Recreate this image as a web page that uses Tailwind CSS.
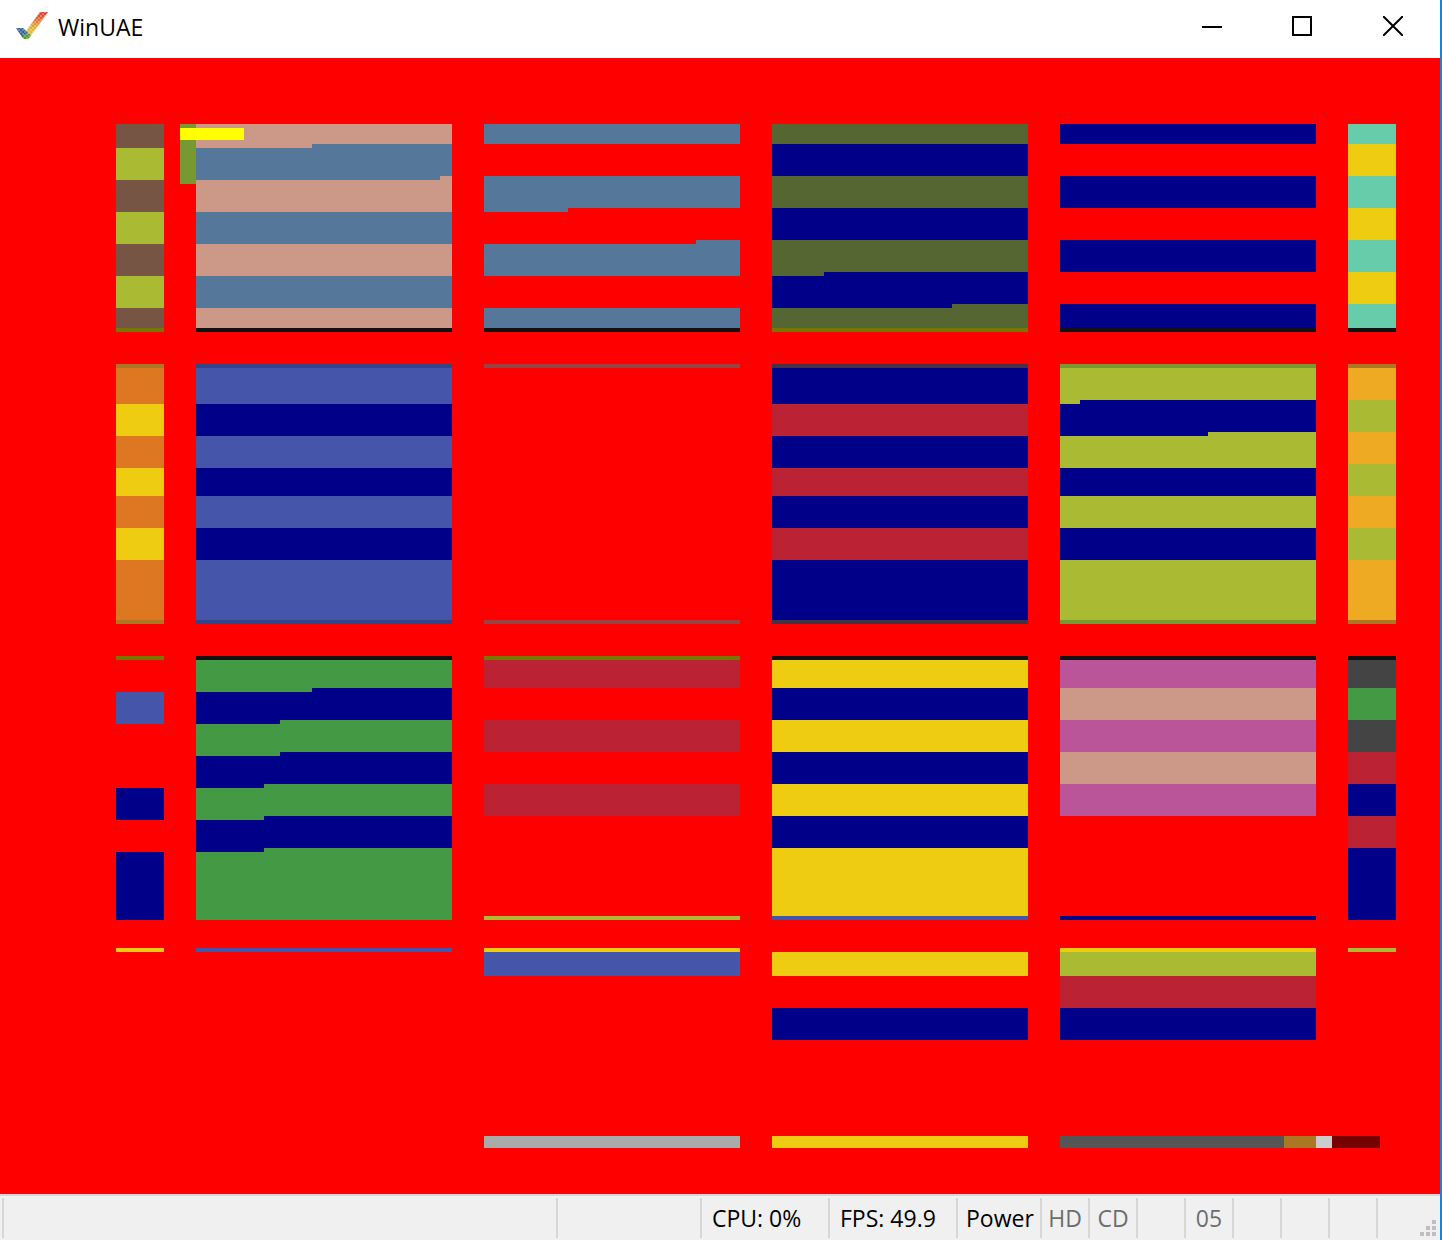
<!DOCTYPE html>
<html lang="en">
<head>
<meta charset="utf-8">
<title>WinUAE</title>
<script src="https://cdn.jsdelivr.net/npm/@tailwindcss/browser@4"></script>
</head>
<body class="flex min-h-screen flex-col border-r-2 border-[#1883d7] bg-white text-[23px] leading-8 text-black font-['Open_Sans',sans-serif]">

<header class="flex h-[58px] shrink-0 items-start justify-between pl-4">
  <div class="flex items-center gap-[10px] pt-[11px]">
    <svg class="h-8 w-8" viewBox="0 0 32 32" aria-hidden="true">
      <defs>
        <linearGradient id="tick" x1="0" y1="0" x2="0" y2="1">
          <stop offset="0" stop-color="#dc3a32"/>
          <stop offset=".2" stop-color="#e2572f"/>
          <stop offset=".4" stop-color="#e38a32"/>
          <stop offset=".6" stop-color="#e3b336"/>
          <stop offset=".82" stop-color="#ddc03a"/>
          <stop offset=".9" stop-color="#6f9a35"/>
          <stop offset="1" stop-color="#4d8f35"/>
        </linearGradient>
        <pattern id="weave" width="4" height="4" patternUnits="userSpaceOnUse">
          <path d="M0 0H2V2H0zM2 2H4V4H2z" fill="#fff" fill-opacity=".28"/>
        </pattern>
      </defs>
      <path d="M24 1H32L14 26L10 28L7 25L10 20z" fill="url(#tick)"/>
      <path d="M0 17H7L12 22L8 27L6 26z" fill="#355f9f"/>
      <path d="M8 23H14V26L12 28H8L6 26z" fill="#559436"/>
      <path d="M24 1H32L14 26L12 28H8L0 17H7L10 20z" fill="url(#weave)"/>
    </svg>
    <h1>WinUAE</h1>
  </div>
  <div class="flex">
    <button type="button" aria-label="Minimize" class="flex h-[52px] w-[92px] items-center justify-center">
      <svg class="h-5 w-5" viewBox="0 0 20 20"><path d="M0 10H20V12H0z"/></svg>
    </button>
    <button type="button" aria-label="Maximize" class="flex h-[52px] w-[88px] items-center justify-center">
      <svg class="h-5 w-5" viewBox="0 0 20 20"><path d="M1 1H19V19H1z" fill="none" stroke="#000" stroke-width="2"/></svg>
    </button>
    <button type="button" aria-label="Close" class="flex h-[52px] w-[94px] items-center justify-center">
      <svg class="h-5 w-5" viewBox="0 0 20 20"><path d="M0 0L20 20M20 0L0 20" fill="none" stroke="#000" stroke-width="2"/></svg>
    </button>
  </div>
</header>

<main class="flex-1 bg-[#ff0000]">
  <svg class="block w-full" viewBox="0 58 1440 1136" shape-rendering="crispEdges" role="img" aria-label="Emulated display">
    <!-- left edge column -->
    <path fill="#775544" d="M116 124H164V328H116z"/>
    <path fill="#aabb33" d="M116 148H164V180H116zM116 212H164V244H116zM116 276H164V308H116z"/>
    <path fill="#777700" d="M116 328H164V332H116zM116 656H164V660H116z"/>
    <path fill="#aa7722" d="M116 364H164V624H116z"/>
    <path fill="#dd7722" d="M116 368H164V620H116z"/>
    <path fill="#eecc11" d="M116 404H164V436H116zM116 468H164V496H116zM116 528H164V560H116zM116 948H164V952H116z"/>
    <path fill="#4455aa" d="M116 692H164V724H116z"/>
    <path fill="#000088" d="M116 788H164V820H116zM116 852H164V920H116z"/>

    <!-- first wide column -->
    <path fill="#cc9988" d="M196 124H452V328H196z"/>
    <path fill="#557799" d="M196 148H312V144H452V176H440V180H196zM196 212H452V244H196zM196 276H452V308H196z"/>
    <path fill="#111111" d="M196 328H452V332H196zM196 656H452V660H196z"/>
    <path fill="#334488" d="M196 364H452V624H196z"/>
    <path fill="#4455aa" d="M196 368H452V620H196zM196 948H452V952H196z"/>
    <path fill="#449944" d="M196 660H452V920H196z"/>
    <path fill="#000088" d="M196 404H452V436H196zM196 468H452V496H196zM196 528H452V560H196zM196 692H312V688H452V720H280V724H196zM196 756H280V752H452V784H264V788H196zM196 820H264V816H452V848H264V852H196z"/>
    <path fill="#779933" d="M180 124H196V184H180z"/>
    <path fill="#ffff00" d="M180 128H244V140H180z"/>

    <!-- second wide column -->
    <path fill="#557799" d="M484 124H740V144H484zM484 176H740V208H568V212H484zM484 244H696V240H740V276H484zM484 308H740V328H484z"/>
    <path fill="#111111" d="M484 328H740V332H484z"/>
    <path fill="#994444" d="M484 364H740V368H484zM484 620H740V624H484z"/>
    <path fill="#777700" d="M484 656H740V660H484z"/>
    <path fill="#bb2233" d="M484 660H740V688H484zM484 720H740V752H484zM484 784H740V816H484z"/>
    <path fill="#aabb33" d="M484 916H740V920H484z"/>
    <path fill="#eecc11" d="M484 948H740V952H484z"/>
    <path fill="#4455aa" d="M484 952H740V976H484z"/>
    <path fill="#aaaaaa" d="M484 1136H740V1148H484z"/>

    <!-- third wide column -->
    <path fill="#556633" d="M772 124H1028V328H772z"/>
    <path fill="#777700" d="M772 328H1028V332H772z"/>
    <path fill="#443344" d="M772 364H1028V624H772z"/>
    <path fill="#000088" d="M772 144H1028V176H772zM772 208H1028V240H772zM772 276H824V272H1028V304H952V308H772zM772 368H1028V620H772z"/>
    <path fill="#bb2233" d="M772 404H1028V436H772zM772 468H1028V496H772zM772 528H1028V560H772z"/>
    <path fill="#111111" d="M772 656H1028V660H772z"/>
    <path fill="#eecc11" d="M772 660H1028V916H772zM772 952H1028V976H772zM772 1136H1028V1148H772z"/>
    <path fill="#000088" d="M772 688H1028V720H772zM772 752H1028V784H772zM772 816H1028V848H772zM772 1008H1028V1040H772z"/>
    <path fill="#4455aa" d="M772 916H1028V920H772z"/>

    <!-- fourth wide column -->
    <path fill="#111111" d="M1060 328H1316V332H1060zM1060 656H1316V660H1060z"/>
    <path fill="#779933" d="M1060 364H1316V624H1060z"/>
    <path fill="#aabb33" d="M1060 368H1316V620H1060zM1060 952H1316V976H1060z"/>
    <path fill="#000088" d="M1060 124H1316V144H1060zM1060 176H1316V208H1060zM1060 240H1316V272H1060zM1060 304H1316V328H1060zM1060 404H1080V400H1316V432H1208V436H1060zM1060 468H1316V496H1060zM1060 528H1316V560H1060zM1060 916H1316V920H1060zM1060 1008H1316V1040H1060z"/>
    <path fill="#bb5599" d="M1060 660H1316V816H1060z"/>
    <path fill="#cc9988" d="M1060 688H1316V720H1060zM1060 752H1316V784H1060z"/>
    <path fill="#eecc11" d="M1060 948H1316V952H1060z"/>
    <path fill="#bb2233" d="M1060 976H1316V1008H1060z"/>
    <path fill="#555555" d="M1060 1136H1284V1148H1060z"/>
    <path fill="#aa7722" d="M1284 1136H1316V1148H1284z"/>
    <path fill="#cccccc" d="M1316 1136H1332V1148H1316z"/>
    <path fill="#770000" d="M1332 1136H1380V1148H1332z"/>

    <!-- right edge column -->
    <path fill="#66ccaa" d="M1348 124H1396V328H1348z"/>
    <path fill="#eecc11" d="M1348 144H1396V176H1348zM1348 208H1396V240H1348zM1348 272H1396V304H1348z"/>
    <path fill="#111111" d="M1348 328H1396V332H1348zM1348 656H1396V660H1348z"/>
    <path fill="#aa7722" d="M1348 364H1396V624H1348z"/>
    <path fill="#eeaa22" d="M1348 368H1396V620H1348z"/>
    <path fill="#aabb33" d="M1348 400H1396V432H1348zM1348 464H1396V496H1348zM1348 528H1396V560H1348zM1348 948H1396V952H1348z"/>
    <path fill="#444444" d="M1348 660H1396V752H1348z"/>
    <path fill="#449944" d="M1348 688H1396V720H1348z"/>
    <path fill="#bb2233" d="M1348 752H1396V784H1348zM1348 816H1396V848H1348z"/>
    <path fill="#000088" d="M1348 784H1396V816H1348zM1348 848H1396V920H1348z"/>
  </svg>
</main>

<footer class="flex h-[46px] shrink-0 border-t-2 border-[#d7d7d7] bg-[#f0f0f0] py-[2px] pl-[2px] whitespace-nowrap *:border-l-2 *:border-[#d7d7d7] *:pt-1">
  <div class="flex-1"></div>
  <div class="w-36"></div>
  <div class="w-32 pl-[10px]">CPU: 0%</div>
  <div class="w-32 pl-[10px]">FPS: 49.9</div>
  <div class="w-[84px] pl-2">Power</div>
  <div class="w-12 text-center text-[#6d6d6d]">HD</div>
  <div class="w-12 text-center text-[#6d6d6d]">CD</div>
  <div class="w-12"></div>
  <div class="w-12 text-center text-[#6d6d6d]">05</div>
  <div class="w-12"></div>
  <div class="w-12"></div>
  <div class="w-12"></div>
  <div class="flex w-16 items-end justify-end pr-1 pb-[2px]">
    <svg class="h-4 w-4" viewBox="0 0 16 16" fill="#bfbfbf" aria-hidden="true"><path d="M12 0H16V4H12zM6 6H10V10H6zM12 6H16V10H12zM0 12H4V16H0zM6 12H10V16H6zM12 12H16V16H12z"/></svg>
  </div>
</footer>
</body>
</html>
